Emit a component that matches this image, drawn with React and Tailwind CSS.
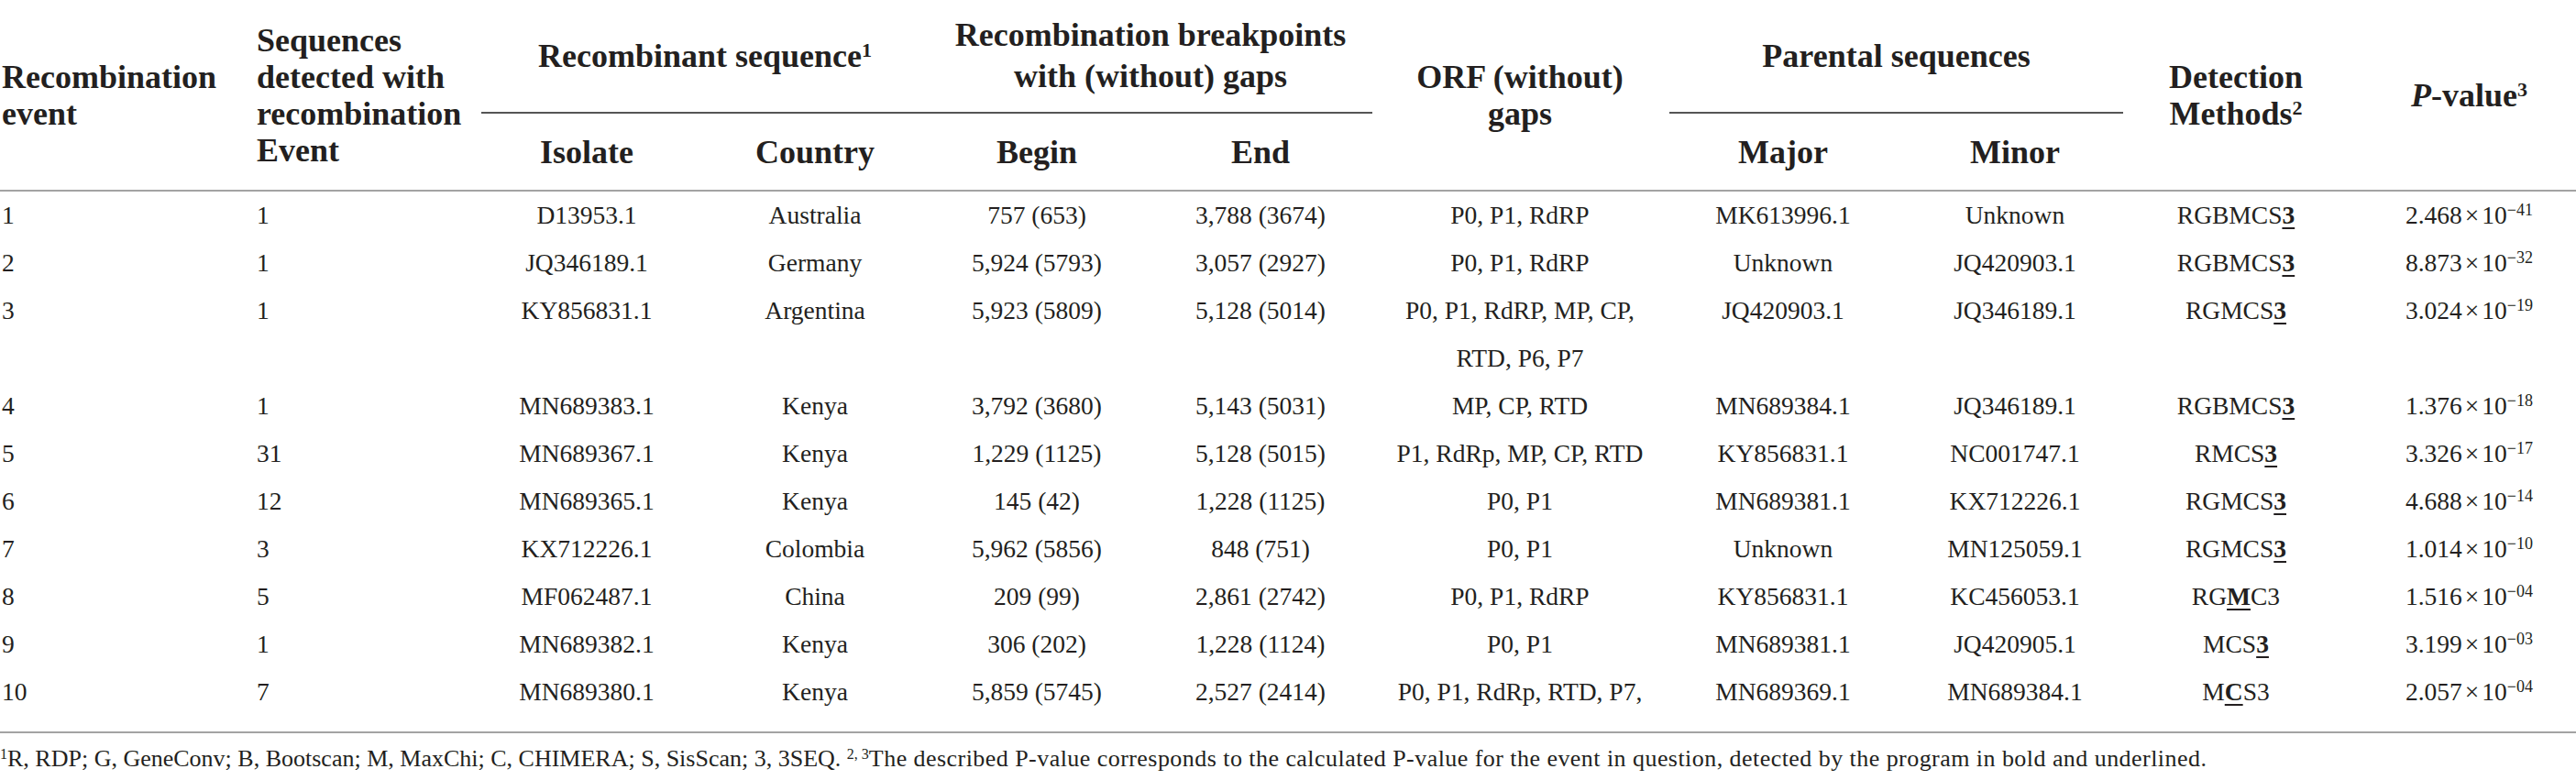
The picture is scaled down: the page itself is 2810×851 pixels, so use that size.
const cols =
  "grid grid-cols-[278px_237px_250px_248px_236px_252px_314px_260px_246px_236px_253px]";

const rows = [
  ["1", "1", "D13953.1", "Australia", "757 (653)", "3,788 (3674)", ["P0, P1, RdRP"], "MK613996.1", "Unknown", ["RGBMCS", "3", ""], ["2.468", "41"]],
  ["2", "1", "JQ346189.1", "Germany", "5,924 (5793)", "3,057 (2927)", ["P0, P1, RdRP"], "Unknown", "JQ420903.1", ["RGBMCS", "3", ""], ["8.873", "32"]],
  ["3", "1", "KY856831.1", "Argentina", "5,923 (5809)", "5,128 (5014)", ["P0, P1, RdRP, MP, CP,", "RTD, P6, P7"], "JQ420903.1", "JQ346189.1", ["RGMCS", "3", ""], ["3.024", "19"]],
  ["4", "1", "MN689383.1", "Kenya", "3,792 (3680)", "5,143 (5031)", ["MP, CP, RTD"], "MN689384.1", "JQ346189.1", ["RGBMCS", "3", ""], ["1.376", "18"]],
  ["5", "31", "MN689367.1", "Kenya", "1,229 (1125)", "5,128 (5015)", ["P1, RdRp, MP, CP, RTD"], "KY856831.1", "NC001747.1", ["RMCS", "3", ""], ["3.326", "17"]],
  ["6", "12", "MN689365.1", "Kenya", "145 (42)", "1,228 (1125)", ["P0, P1"], "MN689381.1", "KX712226.1", ["RGMCS", "3", ""], ["4.688", "14"]],
  ["7", "3", "KX712226.1", "Colombia", "5,962 (5856)", "848 (751)", ["P0, P1"], "Unknown", "MN125059.1", ["RGMCS", "3", ""], ["1.014", "10"]],
  ["8", "5", "MF062487.1", "China", "209 (99)", "2,861 (2742)", ["P0, P1, RdRP"], "KY856831.1", "KC456053.1", ["RG", "M", "C3"], ["1.516", "04"]],
  ["9", "1", "MN689382.1", "Kenya", "306 (202)", "1,228 (1124)", ["P0, P1"], "MN689381.1", "JQ420905.1", ["MCS", "3", ""], ["3.199", "03"]],
  ["10", "7", "MN689380.1", "Kenya", "5,859 (5745)", "2,527 (2414)", ["P0, P1, RdRp, RTD, P7,"], "MN689369.1", "MN689384.1", ["M", "C", "S3"], ["2.057", "04"]],
];

function Row({ r }) {
  const [ev, seq, iso, country, begin, end, orf, major, minor, det, p] = r;
  return (
    <div className={`${cols} items-start leading-[52px]`}>
      <div className="pl-[2px]">{ev}</div>
      <div className="pl-[2px]">{seq}</div>
      <div className="text-center">{iso}</div>
      <div className="text-center">{country}</div>
      <div className="text-center">{begin}</div>
      <div className="text-center">{end}</div>
      <div className="text-center">
        {orf.map((l) => (
          <div key={l}>{l}</div>
        ))}
      </div>
      <div className="text-center">{major}</div>
      <div className="text-center">{minor}</div>
      <div className="text-center">
        {det[0]}
        <b className="underline decoration-[2px] underline-offset-[4px]">{det[1]}</b>
        {det[2]}
      </div>
      <div className="pl-[20px] text-center">
        {p[0]}
        <span className="mx-[3px]">×</span>
        10
        <sup className="text-[18px]">−{p[1]}</sup>
      </div>
    </div>
  );
}

export default function App() {
  return (
    <div className="h-[851px] w-[2810px] overflow-hidden bg-white font-['Liberation_Serif',serif] text-[#231f20]">
      <div className={`${cols} grid-rows-[124px_83px] text-[36px] font-bold leading-[40px]`}>
        <div className="row-span-2 flex flex-col justify-center pl-[2px]">
          <span>Recombination</span>
          <span>event</span>
        </div>
        <div className="row-span-2 flex flex-col justify-center pl-[2px]">
          <span>Sequences</span>
          <span>detected with</span>
          <span>recombination</span>
          <span>Event</span>
        </div>
        <div className="col-span-2 ml-[10px] flex items-center justify-center border-b-2 border-[#555]">
          <span>
            Recombinant sequence<sup className="text-[22px]">1</sup>
          </span>
        </div>
        <div className="col-span-2 mr-[4px] flex flex-col items-center justify-center border-b-2 border-[#555] leading-[45px]">
          <span>Recombination breakpoints</span>
          <span>with (without) gaps</span>
        </div>
        <div className="row-span-2 flex flex-col items-center justify-center">
          <span>ORF (without)</span>
          <span>gaps</span>
        </div>
        <div className="col-span-2 ml-[6px] mr-[5px] flex items-center justify-center border-b-2 border-[#555]">
          Parental sequences
        </div>
        <div className="row-span-2 flex flex-col items-center justify-center">
          <span>Detection</span>
          <span>
            Methods<sup className="text-[22px]">2</sup>
          </span>
        </div>
        <div className="row-span-2 flex items-center justify-center pl-[20px]">
          <span>
            <i>P</i>-value<sup className="text-[22px]">3</sup>
          </span>
        </div>
        <div className="flex items-center justify-center">Isolate</div>
        <div className="flex items-center justify-center">Country</div>
        <div className="flex items-center justify-center">Begin</div>
        <div className="flex items-center justify-center">End</div>
        <div className="flex items-center justify-center">Major</div>
        <div className="flex items-center justify-center">Minor</div>
      </div>
      <div className="h-[2px] bg-[#a3a3a3]" />
      <div className="pb-[17px] text-[27.5px]">
        {rows.map((r) => (
          <Row key={r[0]} r={r} />
        ))}
      </div>
      <div className="h-[2px] bg-[#a3a3a3]" />
      <p className="pt-[14px] text-[26px] leading-[28px]">
        <sup className="text-[16px]">1</sup>R, RDP; G, GeneConv; B, Bootscan; M, MaxChi; C, CHIMERA; S, SisScan; 3, 3SEQ.{" "}
        <sup className="text-[16px]">2, 3</sup>
        <span className="tracking-[0.45px]">
          The described P-value corresponds to the calculated P-value for the event in question, detected by the program in bold and underlined.
        </span>
      </p>
    </div>
  );
}
